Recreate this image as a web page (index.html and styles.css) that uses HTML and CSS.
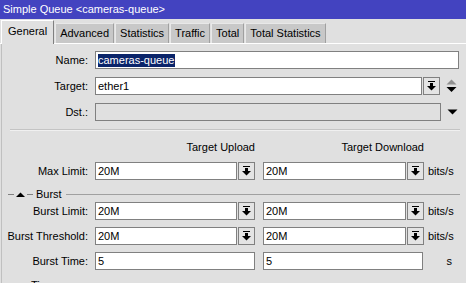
FILE: index.html
```html
<!DOCTYPE html>
<html lang="en">
<head>
    <meta charset="UTF-8">
    <title>Simple Queue &lt;cameras-queue&gt;</title>
    <link rel="stylesheet" href="styles.css">
</head>
<body>
    <div class="window">
        <div class="titlebar">Simple Queue &lt;cameras-queue&gt;</div>

        <div class="tabs">
            <div class="tab active">General</div>
            <div class="tab">Advanced</div>
            <div class="tab">Statistics</div>
            <div class="tab">Traffic</div>
            <div class="tab">Total</div>
            <div class="tab">Total Statistics</div>
        </div>

        <div class="panel">
            <div class="row">
                <div class="label">Name:</div>
                <div class="field w-name"><span class="selected">cameras-queue</span></div>
            </div>

            <div class="row">
                <div class="label">Target:</div>
                <div class="field w-target">ether1</div>
                <div class="drop">
                    <svg width="9" height="10" viewBox="0 0 9 10"><rect x="1" y="0" width="7" height="1" fill="#000"/><rect x="3" y="2" width="3" height="3" fill="#000"/><polygon points="0,5 9,5 4.5,9.5" fill="#000"/></svg>
                </div>
                <div class="updown">
                    <svg width="11" height="14" viewBox="0 0 11 14"><polygon points="0.5,5.5 10.5,5.5 5.5,0.5" fill="#909090"/><polygon points="0.5,8 10.5,8 5.5,13" fill="#000"/></svg>
                </div>
            </div>

            <div class="row">
                <div class="label">Dst.:</div>
                <div class="field w-dst disabled"></div>
                <div class="updown">
                    <svg width="11" height="6" viewBox="0 0 11 6"><polygon points="0.5,0.5 10.5,0.5 5.5,5.5" fill="#000"/></svg>
                </div>
            </div>

            <div class="separator"></div>

            <div class="col-heads">
                <div class="col-head">Target Upload</div>
                <div class="col-head">Target Download</div>
            </div>

            <div class="row">
                <div class="label">Max Limit:</div>
                <div class="field w-up">20M</div>
                <div class="drop">
                    <svg width="9" height="10" viewBox="0 0 9 10"><rect x="1" y="0" width="7" height="1" fill="#000"/><rect x="3" y="2" width="3" height="3" fill="#000"/><polygon points="0,5 9,5 4.5,9.5" fill="#000"/></svg>
                </div>
                <div class="field w-down">20M</div>
                <div class="drop">
                    <svg width="9" height="10" viewBox="0 0 9 10"><rect x="1" y="0" width="7" height="1" fill="#000"/><rect x="3" y="2" width="3" height="3" fill="#000"/><polygon points="0,5 9,5 4.5,9.5" fill="#000"/></svg>
                </div>
                <div class="unit">bits/s</div>
            </div>

            <div class="section">
                <span class="dash"></span>
                <svg width="9" height="5" viewBox="0 0 9 5"><polygon points="0,5 9,5 4.5,0.5" fill="#000"/></svg>
                <span class="dash"></span>
                <span class="section-name">Burst</span>
                <span class="line"></span>
            </div>

            <div class="row tight">
                <div class="label">Burst Limit:</div>
                <div class="field w-up">20M</div>
                <div class="drop">
                    <svg width="9" height="10" viewBox="0 0 9 10"><rect x="1" y="0" width="7" height="1" fill="#000"/><rect x="3" y="2" width="3" height="3" fill="#000"/><polygon points="0,5 9,5 4.5,9.5" fill="#000"/></svg>
                </div>
                <div class="field w-down">20M</div>
                <div class="drop">
                    <svg width="9" height="10" viewBox="0 0 9 10"><rect x="1" y="0" width="7" height="1" fill="#000"/><rect x="3" y="2" width="3" height="3" fill="#000"/><polygon points="0,5 9,5 4.5,9.5" fill="#000"/></svg>
                </div>
                <div class="unit">bits/s</div>
            </div>

            <div class="row tight">
                <div class="label">Burst Threshold:</div>
                <div class="field w-up">20M</div>
                <div class="drop">
                    <svg width="9" height="10" viewBox="0 0 9 10"><rect x="1" y="0" width="7" height="1" fill="#000"/><rect x="3" y="2" width="3" height="3" fill="#000"/><polygon points="0,5 9,5 4.5,9.5" fill="#000"/></svg>
                </div>
                <div class="field w-down">20M</div>
                <div class="drop">
                    <svg width="9" height="10" viewBox="0 0 9 10"><rect x="1" y="0" width="7" height="1" fill="#000"/><rect x="3" y="2" width="3" height="3" fill="#000"/><polygon points="0,5 9,5 4.5,9.5" fill="#000"/></svg>
                </div>
                <div class="unit">bits/s</div>
            </div>

            <div class="row tight">
                <div class="label">Burst Time:</div>
                <div class="field w-time">5</div>
                <div class="field w-time2">5</div>
                <div class="unit unit-s">s</div>
            </div>

            <div class="section last">
                <span class="dash long"></span>
                <span class="section-name">Time</span>
                <span class="line"></span>
            </div>
        </div>
    </div>
</body>
</html>
```

FILE: styles.css
```css
body {
    margin: 0;
    background-color: #e0e0e0;
}
.window {
    width: 466px;
    height: 283px;
    overflow: hidden;
    background-color: #e0e0e0;
    color: #000;
    font-family: "Liberation Sans", Arial, sans-serif;
    font-size: 11px;
}
.titlebar {
    height: 19px;
    line-height: 18px;
    padding-left: 3px;
    background-color: #4343c0;
    color: #ffffff;
}
.tabs {
    display: flex;
    align-items: flex-end;
    gap: 1px;
    height: 24px;
    padding-left: 1px;
    border-bottom: 1px solid #ffffff;
}
.tab {
    height: 20px;
    line-height: 19px;
    padding: 0 4px;
    box-sizing: border-box;
    background-color: #c8c8c8;
    border-top: 1px solid #e8e8e8;
    border-left: 1px solid #e8e8e8;
    border-right: 1px solid #a0a0a0;
}
.tab.active {
    height: 24px;
    margin-bottom: -1px;
    line-height: 20px;
    padding: 0 6px;
    background-color: #e0e0e0;
    border-top: 1px solid #ffffff;
    border-left: 1px solid #ffffff;
    border-right: 1px solid #808080;
}
.panel {
    margin-left: 1px;
    padding-top: 7px;
    border-left: 1px solid #c0c0c0;
    height: 240px;
}
.row {
    display: flex;
    align-items: center;
    height: 18px;
    margin-bottom: 8px;
}
.row.tight {
    margin-bottom: 7px;
}
.label {
    width: 93px;
    padding-right: 7px;
    box-sizing: border-box;
    text-align: right;
    white-space: nowrap;
}
.field {
    height: 18px;
    box-sizing: border-box;
    line-height: 16px;
    padding-left: 2px;
    background-color: #ffffff;
    border: 1px solid #808080;
    white-space: nowrap;
}
.field.disabled {
    background-color: #e0e0e0;
}
.selected {
    background-color: #0a246a;
    color: #ffffff;
    padding: 0 1px 1px 0;
}
.w-name { width: 364px; }
.w-target { width: 327px; }
.w-dst { width: 346px; }
.w-up { width: 142px; }
.w-down { width: 143px; margin-left: 8px; }
.w-time { width: 160px; }
.w-time2 { width: 160px; margin-left: 8px; }
.drop {
    width: 17px;
    height: 18px;
    margin-left: 1px;
    box-sizing: border-box;
    display: flex;
    align-items: center;
    justify-content: center;
    background-color: #e4e4e4;
    border: 1px solid #808080;
}
.updown {
    display: flex;
    align-items: center;
    margin-left: 6px;
}
.unit {
    margin-left: 4px;
}
.unit-s {
    margin-left: 0;
    width: 29px;
    text-align: right;
}
.separator {
    height: 1px;
    margin: 0 6px 0 8px;
    background-color: #c4c4c4;
    border-bottom: 1px solid #f0f0f0;
}
.col-heads {
    display: flex;
    height: 18px;
    line-height: 18px;
    margin: 7px 0 6px 93px;
}
.col-head {
    width: 160px;
    text-align: right;
}
.col-head + .col-head {
    width: 169px;
}
.section {
    display: flex;
    align-items: center;
    gap: 2px;
    height: 16px;
    margin: -2px 0 0 6px;
}
.section.last {
    margin-top: 2px;
}
.dash {
    width: 6px;
    height: 1px;
    background-color: #808080;
}
.dash.long {
    width: 14px;
    height: 2px;
    background-color: #404040;
    margin-right: 6px;
}
.section-name {
    margin-left: 1px;
    margin-right: 2px;
}
.line {
    flex: 1;
    height: 1px;
    margin-right: 6px;
    background-color: #a0a0a0;
}
```
